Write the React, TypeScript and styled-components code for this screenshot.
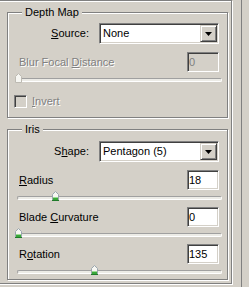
import React from 'react'
import styled, { createGlobalStyle } from 'styled-components'

const GlobalStyle = createGlobalStyle`
  html, body {
    margin: 0;
    padding: 0;
    background: #d4d0c8;
  }
  body {
    font-family: "Liberation Sans", Arial, sans-serif;
    font-size: 11px;
    color: #000;
    overflow: hidden;
  }
`

const Page = styled.div`
  display: flex;
  height: 287px;
`

const Panel = styled.div`
  box-sizing: border-box;
  flex: none;
  width: 236px;
  height: 284px;
  margin-left: -4px;
  padding: 11px 3px 3px 10px;
  border: 1px solid #808080;
  box-shadow: inset 1px 1px 0 #fff, 1px 1px 0 #fff;
  display: flex;
  flex-direction: column;
  gap: 11px;
`

const Divider = styled.div`
  flex: none;
  width: 1px;
  margin-left: 9px;
  background: #808080;
`

const Group = styled.div<{ $pt: number; $pb: number }>`
  position: relative;
  box-sizing: border-box;
  border: 1px solid #808080;
  box-shadow: inset 1px 1px 0 #fff, 1px 1px 0 #fff;
  padding: ${(p) => p.$pt}px 0 ${(p) => p.$pb}px 0;
  display: flex;
  flex-direction: column;
`

const Legend = styled.span`
  position: absolute;
  top: -7px;
  left: 14px;
  padding: 0 3px;
  line-height: 13px;
  background: #d4d0c8;
`

const SelectRow = styled.div`
  display: flex;
  align-items: center;
  justify-content: flex-end;
  gap: 10px;
  height: 21px;
  padding-right: 8px;
`

const FieldRow = styled.div<{ $mt?: number }>`
  display: flex;
  align-items: center;
  justify-content: space-between;
  height: 20px;
  margin-top: ${(p) => p.$mt ?? 0}px;
  padding: 0 8px 0 11px;
`

const Label = styled.span<{ $disabled?: boolean }>`
  line-height: 13px;
  white-space: nowrap;
  color: ${(p) => (p.$disabled ? '#808080' : '#000')};
  text-shadow: ${(p) => (p.$disabled ? '1px 1px 0 #fff' : 'none')};
`

const Combo = styled.div`
  box-sizing: border-box;
  width: 120px;
  height: 21px;
  padding: 1px;
  display: flex;
  background: #fff;
  border: 1px solid;
  border-color: #808080 #fff #fff #808080;
  box-shadow: inset 1px 1px 0 #404040, inset -1px -1px 0 #d4d0c8;
`

const ComboText = styled.span`
  flex: 1;
  padding-left: 2px;
  line-height: 17px;
  white-space: nowrap;
  overflow: hidden;
`

const ComboButton = styled.span`
  box-sizing: border-box;
  width: 17px;
  height: 17px;
  display: flex;
  align-items: center;
  justify-content: center;
  background: #d4d0c8;
  border: 1px solid;
  border-color: #d4d0c8 #404040 #404040 #d4d0c8;
  box-shadow: inset 1px 1px 0 #fff, inset -1px -1px 0 #808080;
`

const TextBox = styled.input<{ $disabled?: boolean }>`
  box-sizing: border-box;
  width: 32px;
  height: 20px;
  margin: 0;
  padding: 0 0 0 1px;
  font: inherit;
  font-size: 11px;
  outline: none;
  color: ${(p) => (p.$disabled ? '#808080' : '#000')};
  background: ${(p) => (p.$disabled ? '#d4d0c8' : '#fff')};
  border: 1px solid;
  border-color: #808080 #fff #fff #808080;
  box-shadow: inset 1px 1px 0 #404040, inset -1px -1px 0 #d4d0c8;
`

const Slider = styled.div`
  position: relative;
  height: 11px;
  margin: 0 5px 0 9px;
`

const Track = styled.div`
  box-sizing: border-box;
  position: absolute;
  top: 6px;
  left: 0;
  right: 0;
  height: 4px;
  border-radius: 2px;
  background: #ecebe6;
  border: 1px solid;
  border-color: #a0a0a0 #fff #fff #a0a0a0;
`

const Thumb = styled.svg`
  position: absolute;
  top: 1px;
  width: 7px;
  height: 10px;
`

const CheckRow = styled.div`
  display: flex;
  align-items: center;
  gap: 5px;
  height: 13px;
  margin-top: 12px;
  padding-left: 6px;
`

const CheckBox = styled.span`
  box-sizing: border-box;
  width: 13px;
  height: 13px;
  background: #d4d0c8;
  border: 1px solid;
  border-color: #808080 #fff #fff #808080;
  box-shadow: inset 1px 1px 0 #404040, inset -1px -1px 0 #d4d0c8;
`

const Arrow = () => (
  <svg width="7" height="4" viewBox="0 0 7 4">
    <path d="M0 0h7L3.5 4z" fill="#000" />
  </svg>
)

const SliderBar = ({ frac, disabled }: { frac: number; disabled?: boolean }) => (
  <Slider>
    <Track />
    <Thumb viewBox="0 0 7 10" style={{ left: Math.round(frac * 203) - 2 }}>
      <path
        d="M0.5 9.5V3.5L3.5 0.5L6.5 3.5V9.5Z"
        fill="#f7f7f3"
        stroke={disabled ? '#bdbab2' : '#9aa6ae'}
        strokeWidth="1"
      />
      {!disabled && (
        <>
          <rect x="1" y="6" width="5" height="1" fill="#9cdc94" />
          <rect x="1" y="7" width="5" height="2" fill="#3aa83a" />
          <rect x="0" y="9" width="7" height="1" fill="#1f7a2a" />
        </>
      )}
    </Thumb>
  </Slider>
)

const Field = ({
  label,
  value,
  frac,
  mt,
  disabled,
}: {
  label: React.ReactNode
  value: string
  frac: number
  mt?: number
  disabled?: boolean
}) => (
  <>
    <FieldRow $mt={mt}>
      <Label $disabled={disabled}>{label}</Label>
      <TextBox $disabled={disabled} readOnly value={value} />
    </FieldRow>
    <SliderBar frac={frac} disabled={disabled} />
  </>
)

export default function App() {
  return (
    <>
      <GlobalStyle />
      <Page>
        <Panel>
          <Group $pt={10} $pb={9}>
            <Legend>Depth Map</Legend>
            <SelectRow>
              <Label>
                <u>S</u>ource:
              </Label>
              <Combo>
                <ComboText>None</ComboText>
                <ComboButton>
                  <Arrow />
                </ComboButton>
              </Combo>
            </SelectRow>
            <Field
              mt={8}
              disabled
              value="0"
              frac={0}
              label={
                <>
                  Blur Focal <u>D</u>istance
                </>
              }
            />
            <CheckRow>
              <CheckBox />
              <Label $disabled>
                <u>I</u>nvert
              </Label>
            </CheckRow>
          </Group>

          <Group $pt={11} $pb={4}>
            <Legend>Iris</Legend>
            <SelectRow>
              <Label>
                S<u>h</u>ape:
              </Label>
              <Combo>
                <ComboText>Pentagon (5)</ComboText>
                <ComboButton>
                  <Arrow />
                </ComboButton>
              </Combo>
            </SelectRow>
            <Field
              mt={8}
              value="18"
              frac={18 / 100}
              label={
                <>
                  <u>R</u>adius
                </>
              }
            />
            <Field
              mt={6}
              value="0"
              frac={0}
              label={
                <>
                  Blade <u>C</u>urvature
                </>
              }
            />
            <Field
              mt={6}
              value="135"
              frac={135 / 360}
              label={
                <>
                  R<u>o</u>tation
                </>
              }
            />
          </Group>
        </Panel>
        <Divider />
      </Page>
    </>
  )
}
